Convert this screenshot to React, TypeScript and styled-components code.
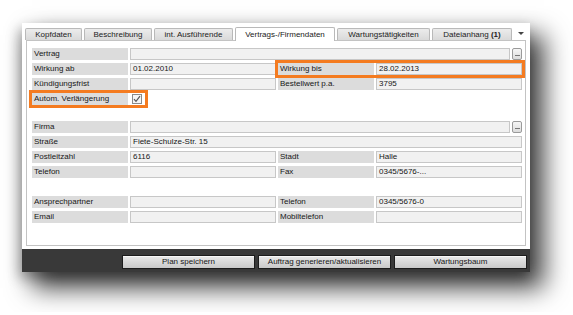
import React from "react";
import styled, { createGlobalStyle, css } from "styled-components";

const GlobalStyle = createGlobalStyle`
  html, body {
    margin: 0;
    padding: 0;
    background: #fff;
  }
  body {
    font-family: "Liberation Sans", Arial, sans-serif;
    font-size: 8px;
    color: #161616;
  }
`;

const HIGHLIGHT = "#f47b20";

const Page = styled.div`
  padding: 23px 0 40px 22px;
`;

const Window = styled.div`
  width: 508px;
  background: #fff;
  padding-top: 4px;
  box-shadow: 12px 14px 24px 2px rgba(0, 0, 0, 0.75), -3px 6px 12px rgba(0, 0, 0, 0.3);
`;

const TabBar = styled.div`
  display: flex;
  align-items: flex-end;
  gap: 2px;
  height: 13px;
  padding: 0 4px 0 3px;
`;

const Tab = styled.div<{ $active?: boolean; $w: number }>`
  width: ${(p) => p.$w}px;
  height: 12px;
  box-sizing: border-box;
  border: 1px solid #b9b9b9;
  border-bottom: none;
  border-radius: 2px 2px 0 0;
  background: linear-gradient(#ececec, #d9d9d9);
  text-align: center;
  line-height: 12px;
  color: #222;
  white-space: nowrap;
  ${(p) =>
    p.$active &&
    css`
      height: 14px;
      background: #fff;
      margin-bottom: -1px;
      position: relative;
      z-index: 1;
      line-height: 13px;
    `}

  b {
    font-weight: bold;
  }
`;

const TabMenu = styled.div`
  margin-left: auto;
  align-self: center;
  width: 0;
  height: 0;
  margin-right: 2px;
  border-left: 3px solid transparent;
  border-right: 3px solid transparent;
  border-top: 3px solid #444;
`;

const Panel = styled.div`
  margin: 0 4px;
  height: 206px;
  box-sizing: border-box;
  border: 1px solid #c3c3c3;
  padding: 7px 3px 0 5px;
`;

const Form = styled.div`
  display: flex;
  flex-direction: column;
  gap: 3px;
`;

const Row = styled.div<{ $space?: number }>`
  display: flex;
  gap: 2px;
  height: 12px;
  margin-top: ${(p) => p.$space ?? 0}px;
`;

const Pair = styled.div<{ $marked?: boolean }>`
  display: flex;
  gap: 2px;
  width: 244px;
  ${(p) =>
    p.$marked &&
    css`
      outline: 3px solid ${HIGHLIGHT};
    `}
`;

const Label = styled.div`
  width: 96px;
  flex: none;
  box-sizing: border-box;
  background: #dcdcdc;
  padding-left: 2px;
  line-height: 12px;
  white-space: nowrap;
`;

const Value = styled.div`
  flex: 1;
  box-sizing: border-box;
  background: #f1f1f1;
  border: 1px solid #c7c7c7;
  padding-left: 2px;
  line-height: 10px;
  white-space: nowrap;
  overflow: hidden;
`;

const PickButton = styled.div`
  width: 10px;
  flex: none;
  box-sizing: border-box;
  border: 1px solid #9a9a9a;
  border-radius: 2px;
  background: linear-gradient(#f6f6f6, #dcdcdc);
  display: flex;
  align-items: flex-end;
  justify-content: center;
  padding-bottom: 2px;
`;

const CheckGroup = styled.div`
  display: flex;
  align-items: center;
  gap: 4px;
  padding-right: 3px;
  outline: 3px solid ${HIGHLIGHT};
`;

const CheckBox = styled.div`
  width: 10px;
  height: 10px;
  box-sizing: border-box;
  border: 1px solid #8a8a8a;
  background: #f5f5f5;
  display: flex;
  align-items: center;
  justify-content: center;
`;

const Footer = styled.div`
  margin-top: 3px;
  height: 23px;
  box-sizing: border-box;
  background: #393939;
  display: flex;
  justify-content: flex-end;
  gap: 3px;
  padding: 6px 3px 0 0;
`;

const Button = styled.button`
  width: 133px;
  height: 14px;
  padding: 0;
  box-sizing: border-box;
  border: 1px solid #1c1c1c;
  background: linear-gradient(#e9e9e9, #c9c9c9);
  box-shadow: inset 0 1px 0 #f7f7f7;
  font-family: "Liberation Sans", Arial, sans-serif;
  font-size: 8px;
  color: #161616;
  line-height: 12px;
`;

const Field = ({ label, value, marked }: { label: string; value?: string; marked?: boolean }) => (
  <Pair $marked={marked}>
    <Label>{label}</Label>
    <Value>{value}</Value>
  </Pair>
);

const Dots = () => (
  <svg width="5" height="2" viewBox="0 0 5 2">
    <rect x="0" y="0" width="5" height="1" fill="#777" />
  </svg>
);

const tabs = [
  { name: "Kopfdaten", w: 57 },
  { name: "Beschreibung", w: 68 },
  { name: "int. Ausführende", w: 79 },
  { name: "Vertrags-/Firmendaten", w: 100, active: true },
  { name: "Wartungstätigkeiten", w: 93 },
];

export default function App() {
  return (
    <>
      <GlobalStyle />
      <Page>
        <Window>
          <TabBar>
            {tabs.map((t) => (
              <Tab key={t.name} $w={t.w} $active={t.active}>
                {t.name}
              </Tab>
            ))}
            <Tab $w={80}>
              Dateianhang <b>(1)</b>
            </Tab>
            <TabMenu />
          </TabBar>

          <Panel>
            <Form>
              <Row>
                <Label>Vertrag</Label>
                <Value />
                <PickButton>
                  <Dots />
                </PickButton>
              </Row>
              <Row>
                <Field label="Wirkung ab" value="01.02.2010" />
                <Field label="Wirkung bis" value="28.02.2013" marked />
              </Row>
              <Row>
                <Field label="Kündigungsfrist" />
                <Field label="Bestellwert p.a." value="3795" />
              </Row>
              <Row>
                <CheckGroup>
                  <Label>Autom. Verlängerung</Label>
                  <CheckBox>
                    <svg width="8" height="8" viewBox="0 0 8 8">
                      <path d="M1 4.2 L3 6.3 L7 1.2" fill="none" stroke="#555" strokeWidth="1.2" />
                    </svg>
                  </CheckBox>
                </CheckGroup>
              </Row>

              <Row $space={13}>
                <Label>Firma</Label>
                <Value />
                <PickButton>
                  <Dots />
                </PickButton>
              </Row>
              <Row>
                <Label>Straße</Label>
                <Value>Fiete-Schulze-Str. 15</Value>
              </Row>
              <Row>
                <Field label="Postleitzahl" value="6116" />
                <Field label="Stadt" value="Halle" />
              </Row>
              <Row>
                <Field label="Telefon" />
                <Field label="Fax" value="0345/5676-..." />
              </Row>

              <Row $space={15}>
                <Field label="Ansprechpartner" />
                <Field label="Telefon" value="0345/5676-0" />
              </Row>
              <Row>
                <Field label="Email" />
                <Field label="Mobiltelefon" />
              </Row>
            </Form>
          </Panel>

          <Footer>
            <Button>Plan speichern</Button>
            <Button>Auftrag generieren/aktualisieren</Button>
            <Button>Wartungsbaum</Button>
          </Footer>
        </Window>
      </Page>
    </>
  );
}
